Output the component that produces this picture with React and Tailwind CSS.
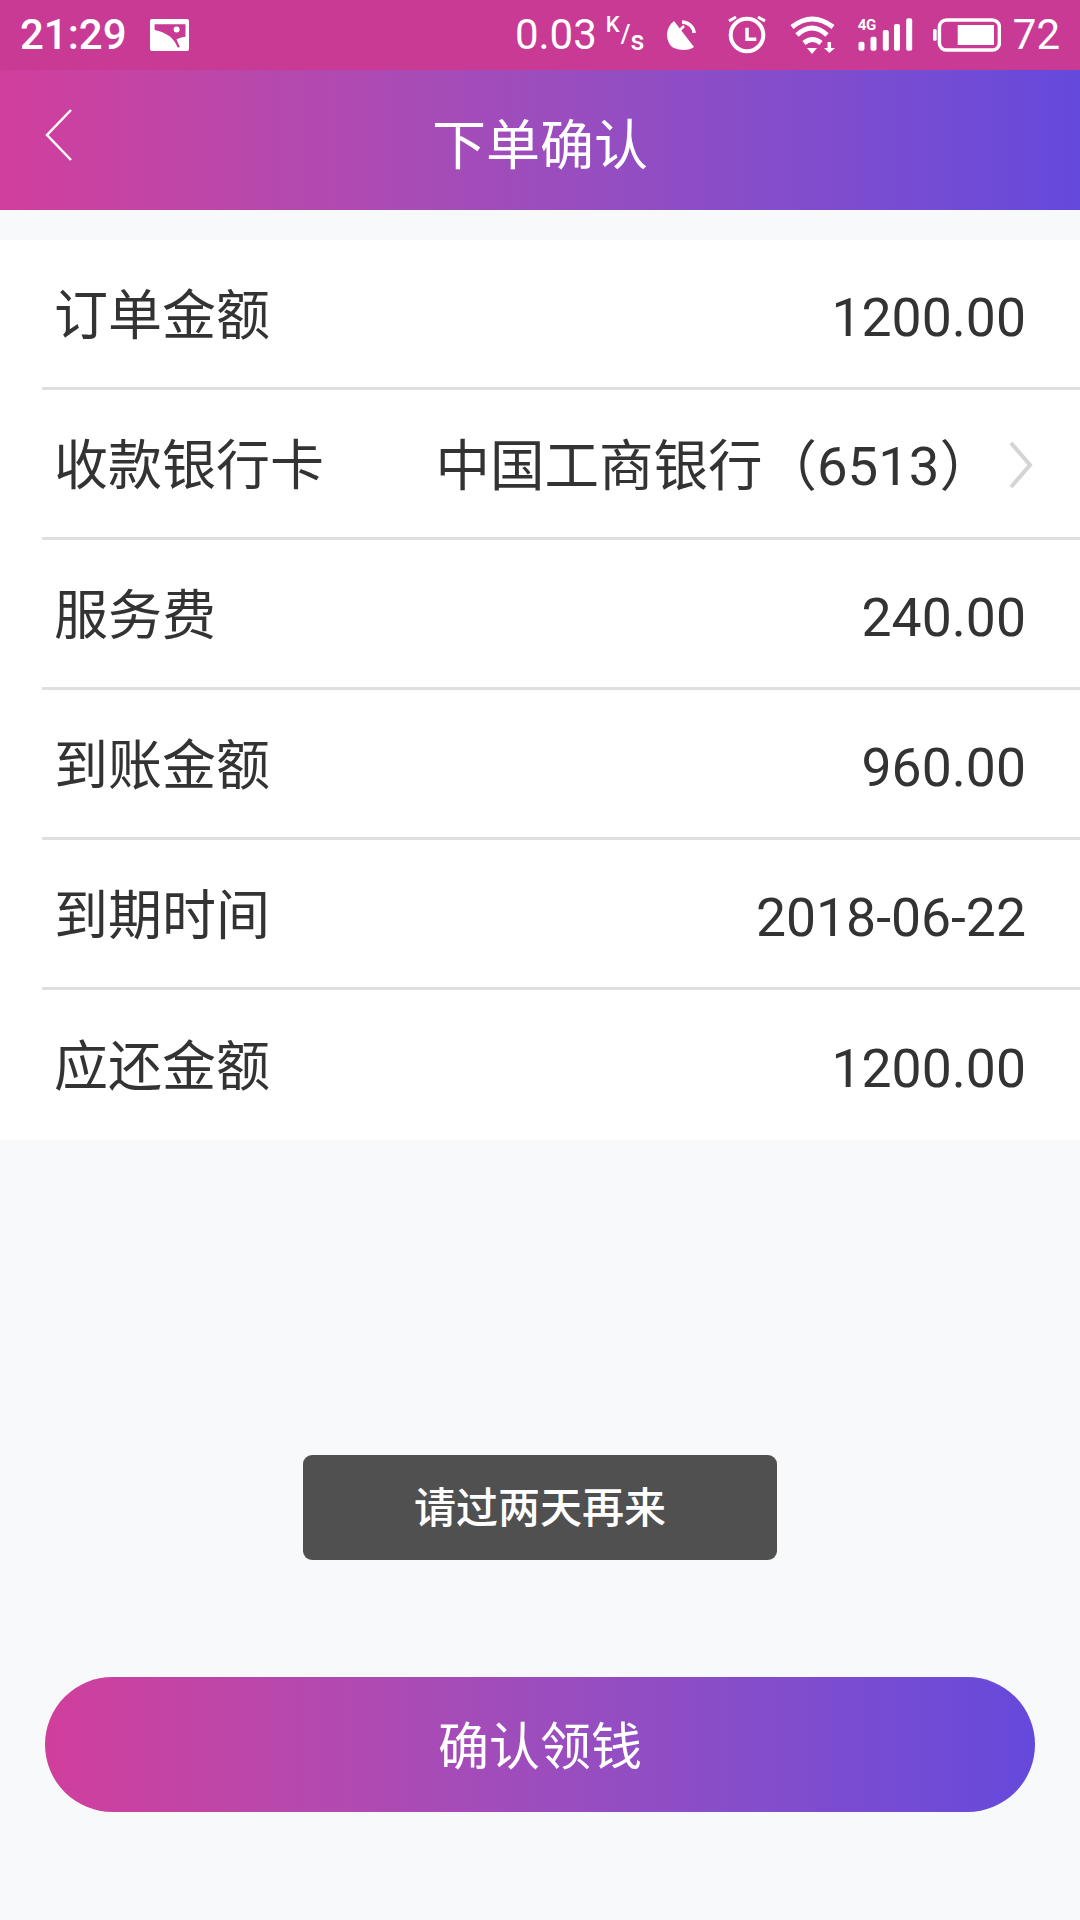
import React from 'react';

const rows = [
  { label: '订单金额', value: '1200.00' },
  { label: '收款银行卡', value: '中国工商银行（6513）', arrow: true },
  { label: '服务费', value: '240.00' },
  { label: '到账金额', value: '960.00' },
  { label: '到期时间', value: '2018-06-22' },
  { label: '应还金额', value: '1200.00' },
];

const PictureIcon = () => (
  <svg width="39" height="32" viewBox="0 0 39 32" fill="none">
    <rect width="39" height="32" rx="2" fill="#fff" />
    <path d="M4.600 5.300H35.500V17.700C32 18 29 19 26.500 20.500C27.500 23 28.500 25 30 28L27.500 28.500C26 24.500 24 21 20 17.500C15 14 10 12 4.600 11z" fill="#c93a94" />
    <circle cx="26.600" cy="10.500" r="3" fill="#fff" />
  </svg>
);

const SatelliteIcon = () => (
  <svg width="31" height="32" viewBox="0 0 31 32" fill="none">
    <path d="M9 2L29 28C24 32 14 32 7 28C0 21 0 9 9 2z" fill="#fff" />
    <path d="M14 12l5-5" stroke="#fff" strokeWidth="2.500" />
    <path d="M17 3C23 3 29 8 29 14" stroke="#fff" strokeWidth="3.500" />
  </svg>
);

const AlarmIcon = () => (
  <svg width="40" height="40" viewBox="0 0 40 40" fill="none">
    <circle cx="20" cy="20" r="16.300" stroke="#fff" strokeWidth="4" />
    <path d="M20 12.700V24.300H29.300" stroke="#fff" strokeWidth="3.500" />
    <path d="M2 6L9 2M31 2L38 6" stroke="#fff" strokeWidth="3" />
  </svg>
);

const WifiIcon = () => (
  <svg width="48" height="40" viewBox="0 0 48 40" fill="none">
    <path d="M3 12Q23-4 44 12" stroke="#fff" strokeWidth="5" />
    <path d="M8 20Q23 6 38 20" stroke="#fff" strokeWidth="5" />
    <path d="M15 28Q23.500 21 32 28" stroke="#fff" strokeWidth="5" />
    <path d="M18 33h10l-5 6z" fill="#fff" />
    <path d="M40.300 27v7" stroke="#fff" strokeWidth="3.500" />
    <path d="M35 33h11l-5.700 5z" fill="#fff" />
  </svg>
);

const SignalIcon = () => (
  <div className="relative w-[55px] h-[34px]">
    <span className="absolute left-0 top-[-1px] text-[15px] leading-[16px] font-bold tracking-tight text-white">4G</span>
    <svg width="55" height="34" viewBox="0 0 55 34" fill="#fff">
      <rect x="0.500" y="23.700" width="6" height="9" rx="2" />
      <rect x="12.500" y="18.700" width="6" height="14" rx="2" />
      <rect x="24.800" y="12" width="6" height="20.700" rx="2" />
      <rect x="36" y="6" width="6" height="26.700" rx="2" />
      <rect x="48.200" y="0.300" width="6" height="32.400" rx="2" />
    </svg>
  </div>
);

const BatteryIcon = () => (
  <svg width="68" height="36" viewBox="0 0 68 36" fill="none">
    <rect x="0" y="12" width="3.700" height="11.700" rx="1.500" fill="#fff" />
    <rect x="6.400" y="3" width="60" height="30" rx="7" stroke="#fff" strokeWidth="3.500" />
    <rect x="24.700" y="8" width="36.300" height="20" fill="#fff" />
  </svg>
);

const StatusBar = () => (
  <div className="h-[70px] bg-[#c93a94] flex items-center px-[20px] text-white leading-none">
    <span className="text-[42px] font-medium">21:29</span>
    <div className="ml-[23px]"><PictureIcon /></div>
    <div className="ml-auto flex items-center text-[42px]">
      <span>0.03</span>
      <span className="ml-[9px] flex items-start w-[37px] h-[36px] text-[22px] leading-[15px] font-medium">
        K
        <span className="ml-[1px] mt-[6px] text-[25px] leading-[24px] font-medium">/</span>
        <span className="mt-[14px] text-[27px] leading-[20px] font-medium">s</span>
      </span>
      <div className="ml-[22px]"><SatelliteIcon /></div>
      <div className="ml-[31px]"><AlarmIcon /></div>
      <div className="ml-[22px]"><WifiIcon /></div>
      <div className="ml-[21px]"><SignalIcon /></div>
      <div className="ml-[20px]"><BatteryIcon /></div>
      <span className="ml-[12px]">72</span>
    </div>
  </div>
);

const App = () => {
  return (
    <div className="relative w-[1080px] h-[1920px] overflow-hidden bg-[#f8f9fb] font-['Roboto','Noto_Sans_CJK_SC',sans-serif]">
      <StatusBar />

      <div className="relative h-[140px] bg-gradient-to-r from-[#d13e9c] to-[#6549dc] flex items-center justify-center">
        <svg className="absolute left-[44px] top-[38px]" width="30" height="54" viewBox="0 0 30 54" fill="none">
          <path d="M27 2L3 27l24 25" stroke="#fff" strokeWidth="2.500" />
        </svg>
        <h1 className="pt-[13px] text-[54px] leading-none text-white font-normal">下单确认</h1>
      </div>

      <div className="mt-[30px] bg-white">
        {rows.map((row, i) => (
          <div
            key={row.label}
            className={
              i < rows.length - 1
                ? 'ml-[42px] pl-[12px] pt-[6px] h-[150px] flex items-center justify-between border-b-[3px] border-[#dfdfdf] text-[#333333]'
                : 'ml-[42px] pl-[12px] pt-[6px] h-[150px] flex items-center justify-between text-[#333333]'
            }
          >
            <span className="text-[54px] leading-none">{row.label}</span>
            <div className={row.arrow ? 'flex items-center pr-[86px]' : 'flex items-center pr-[54px] pt-[2px]'}>
              <span className={row.arrow ? 'text-[54.5px] leading-none' : 'text-[53.5px] leading-none'}>{row.value}</span>
              {row.arrow && (
                <svg className="absolute right-[46px] -mt-[4px]" width="26" height="50" viewBox="0 0 26 50" fill="none">
                  <path d="M3 3l19 22L3 47" stroke="#d4d4d4" strokeWidth="4" />
                </svg>
              )}
            </div>
          </div>
        ))}
      </div>

      <div className="absolute left-[303px] top-[1455px] w-[474px] h-[105px] pt-[2px] rounded-[9px] bg-[#505050] flex items-center justify-center text-white text-[42px] font-medium">
        请过两天再来
      </div>

      <button className="block ml-[45px] mt-[537px] w-[990px] h-[135px] pt-[5px] rounded-full bg-gradient-to-r from-[#d13e9c] to-[#6549dc] text-white text-[51px] leading-none">
        确认领钱
      </button>
    </div>
  );
};

export default App;
